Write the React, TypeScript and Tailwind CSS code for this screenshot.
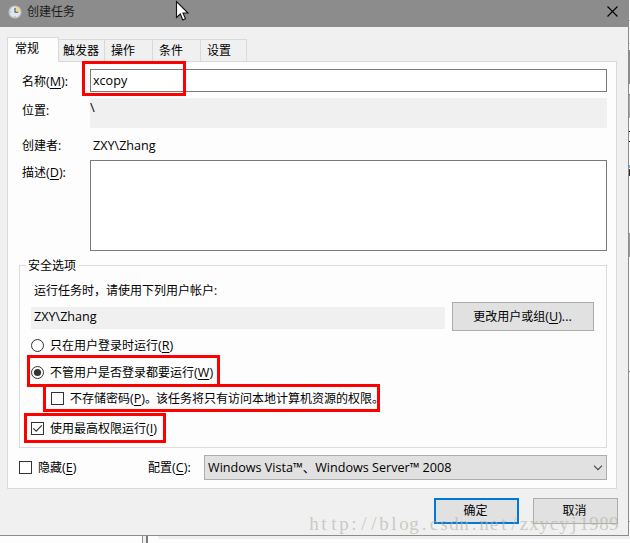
import type { ReactNode } from "react";

const RED = "pointer-events-none absolute border-3 border-[#ff0000]";

function Key({ k, after = "" }: { k: string; after?: string }) {
  return (
    <span className="text-[12.6px]">
      (<span className="underline decoration-1 underline-offset-2">{k}</span>){after}
    </span>
  );
}

function Check({ checked = false }: { checked?: boolean }) {
  return (
    <span className="flex size-[13px] shrink-0 items-center justify-center border border-[#333] bg-white">
      {checked && (
        <svg width="11" height="11" viewBox="0 0 11 11" fill="none" stroke="#333" strokeWidth="1.2">
          <path d="M1.3 5.3 4.2 8.2 9.8 2.4" />
        </svg>
      )}
    </span>
  );
}

function Radio({ checked = false }: { checked?: boolean }) {
  return (
    <svg className="shrink-0" width="13" height="13" viewBox="0 0 13 13">
      <circle cx="6.5" cy="6.5" r="6" fill="#fff" stroke="#333" />
      {checked && <circle cx="6.5" cy="6.5" r="3.6" fill="#333" />}
    </svg>
  );
}

function Tab({ children, className }: { children: ReactNode; className: string }) {
  return (
    <div className={`flex h-[22px] items-center border-t border-r border-[#d9d9d9] bg-[#f0f0f0] ${className}`}>
      {children}
    </div>
  );
}

function ClockIcon() {
  return (
    <svg width="14" height="14" viewBox="0 0 14 14">
      <circle cx="7" cy="7" r="6" fill="#dfe6ec" stroke="#b9c0c6" strokeWidth="1.2" />
      <path d="M7 7V1.8A5.2 5.2 0 0 1 12.2 7Z" fill="#f3d694" />
      <path d="M7 3v4.3h3.2" fill="none" stroke="#4b5660" strokeWidth="1.1" />
      <path d="M2.2 7h.8M7 11.2v.8" stroke="#8896a2" />
    </svg>
  );
}

function Backdrop() {
  return (
    <div className="flex h-[7px] bg-[#fdfdfd]">
      <div className="w-[142px]" />
      <div className="w-px bg-[#8b9097]" />
      <div className="w-[3px] bg-[#efefef]" />
      <div className="w-[2px] bg-[#777b80]" />
      <div className="w-[10px]" />
      <div className="h-[3px] flex-1 bg-[#f0f0f0]" />
    </div>
  );
}

export default function App() {
  return (
    <div className="relative h-[543px] w-[630px] overflow-hidden bg-[#fdfdfd] font-['Open_Sans','Noto_Sans_CJK_SC',sans-serif] text-[12px] leading-[16px] whitespace-nowrap text-black">
      <div className="flex">
        <div className="flex h-[536px] w-[629px] flex-col border-r border-b border-[#8c8c8c] bg-[#f0f0f0]">
          <header className="flex h-[27px] shrink-0 items-center bg-[#8c8c8c] pr-[10px] pb-[3px] pl-[8px]">
            <ClockIcon />
            <span className="ml-[5px] flex-1 text-[#1c1c1c]">创建任务</span>
            <svg width="11" height="11" viewBox="0 0 11 11" stroke="#000" strokeWidth="1.1" className="mb-px">
              <path d="M.5.5 10.5 10.5M10.5.5.5 10.5" />
            </svg>
          </header>

          <div className="mt-[10px] ml-[7px] flex h-[24px] shrink-0 items-end">
            <div className="z-10 -mb-px flex h-[25px] w-[52px] items-center border-x border-t border-[#d9d9d9] bg-[#fdfdfd] pb-[2px] pl-[7px]">
              常规
            </div>
            <Tab className="w-[46px] pl-[4px]">触发器</Tab>
            <Tab className="w-[48px] pl-[6px]">操作</Tab>
            <Tab className="w-[48px] pl-[6px]">条件</Tab>
            <Tab className="w-[46px] pl-[6px]">设置</Tab>
          </div>

          <main className="ml-[7px] flex h-[428px] w-[610px] shrink-0 flex-col border border-[#d9d9d9] bg-[#fdfdfd] pt-[7px] pr-[9px] pl-[11px]">
            <div className="flex h-[23px] items-center">
              <span className="w-[71px] pt-[2px] pl-[3px]">名称<Key k="M" after=":" /></span>
              <div className="flex h-[23px] flex-1 items-center border border-[#7a7a7a] bg-white pl-[2px] text-[12.6px]">xcopy</div>
            </div>
            <div className="mt-[6px] flex h-[30px]">
              <span className="w-[71px] pt-[5px] pl-[3px]">位置:</span>
              <div className="flex-1 bg-[#f0f0f0] pt-[1px] text-[13px]">\</div>
            </div>
            <div className="mt-[10px] flex h-[16px] items-center">
              <span className="w-[71px] pl-[3px]">创建者:</span>
              <span className="pl-[3px] text-[12.6px]">ZXY\Zhang</span>
            </div>
            <div className="mt-[6px] flex h-[91px]">
              <span className="w-[71px] pt-[5px] pl-[3px]">描述<Key k="D" after=":" /></span>
              <div className="flex-1 border border-[#7a7a7a] bg-white" />
            </div>

            <section className="mt-[14px] flex h-[183px] shrink-0 flex-col border border-[#dcdcdc] pl-[11px]">
              <div className="-mt-[8px] -ml-[5px] h-[16px] w-[53px] bg-[#fdfdfd] pl-[2px]">安全选项</div>
              <div className="mt-[9px] h-[16px] pl-[3px]">运行任务时，请使用下列用户帐户:</div>
              <div className="mt-[3px] flex h-[29px] items-center">
                <div className="mt-[3px] flex h-[22px] w-[414px] items-center bg-[#f0f0f0] pb-[3px] pl-[3px] text-[12.6px]">ZXY\Zhang</div>
                <div className="ml-[7px] flex h-[29px] w-[142px] items-center justify-center border border-[#adadad] bg-[#e1e1e1] pr-px">
                  更改用户或组<Key k="U" after="..." />
                </div>
              </div>
              <div className="mt-[6px] flex h-[17px] items-center gap-[6px]">
                <Radio />
                <span>只在用户登录时运行<Key k="R" /></span>
              </div>
              <div className="mt-[10px] flex h-[17px] items-center gap-[6px]">
                <Radio checked />
                <span>不管用户是否登录都要运行<Key k="W" /></span>
              </div>
              <div className="mt-[9px] ml-[20px] flex h-[17px] items-center gap-[6px]">
                <Check />
                <span>不存储密码<Key k="P" />。<span className="-ml-px">该任务将只有访问本地计算机资源的权限。</span></span>
              </div>
              <div className="mt-[13px] flex h-[17px] items-center gap-[6px]">
                <Check checked />
                <span>使用最高权限运行<Key k="I" /></span>
              </div>
            </section>

            <div className="mt-[7px] flex h-[25px] shrink-0 items-center">
              <Check />
              <span className="ml-[6px] w-[110px]">隐藏<Key k="E" /></span>
              <span className="w-[56px]">配置<Key k="C" after=":" /></span>
              <div className="flex h-[25px] flex-1 items-center justify-between border border-[#adadad] bg-[#e1e1e1] pr-[3px] pl-[3px] text-[12.6px]">
                <span>Windows Vista™、Windows Server™ 2008</span>
                <svg width="10" height="6" viewBox="0 0 10 6" fill="none" stroke="#444" strokeWidth="1.1">
                  <path d="M1 .7 5 4.7 9 .7" />
                </svg>
              </div>
            </div>
          </main>

          <footer className="mt-[9px] flex h-[26px] shrink-0 justify-end gap-[14px] pr-[10px]">
            <div className="flex w-[85px] items-center justify-center border-2 border-[#0078d7] bg-[#e1e1e1] pr-[2px]">确定</div>
            <div className="flex w-[85px] items-center justify-center border border-[#adadad] bg-[#e1e1e1] pr-[2px]">取消</div>
          </footer>
        </div>

        <div className="flex h-[536px] w-px flex-col bg-[#fdfdfd]">
          <div className="mt-[20px] h-px bg-[#bbb]" />
          <div className="mt-[22px] h-px bg-[#ccc]" />
          <div className="mt-[6px] h-[34px] bg-[#8c8c8c]" />
          <div className="mt-[10px] h-px bg-[#777]" />
          <div className="h-[23px] bg-[#aaa]" />
          <div className="mt-[13px] h-px bg-black" />
          <div className="mt-[9px] h-px bg-black" />
          <div className="mt-[23px] h-[3px] bg-[#6aa5dd]" />
          <div className="mt-px h-[7px] bg-[#333]" />
          <div className="mt-[57px] h-[24px] bg-[#999]" />
          <div className="mt-[114px] h-px bg-[#777]" />
          <div className="mt-[149px] h-px bg-[#aaa]" />
        </div>
      </div>
      <Backdrop />

      <div className={`${RED} top-[61px] left-[82px] h-[35px] w-[104px]`} />
      <div className={`${RED} top-[355px] left-[27px] h-[32px] w-[193px]`} />
      <div className={`${RED} top-[384px] left-[43px] h-[28px] w-[337px]`} />
      <div className={`${RED} top-[413px] left-[24px] h-[30px] w-[142px]`} />

      <svg className="absolute top-0 left-[175px]" width="15" height="22" viewBox="0 0 15 22">
        <path d="M1.5 1.5v16l3.8-3.5 2.5 6 2.7-1.2L8 13h5Z" fill="#fff" stroke="#111" strokeWidth="1.1" />
      </svg>

      <div className="pointer-events-none absolute top-[512px] left-[309px] flex font-['Liberation_Serif',serif] text-[19px] leading-[24px] text-[#b4b4a8]/65">
        {"http://blog.csdn.net/zxycyj1989".split("").map((c, i) => (
          <span key={i} className="w-[10px] text-center">{c}</span>
        ))}
      </div>
    </div>
  );
}
